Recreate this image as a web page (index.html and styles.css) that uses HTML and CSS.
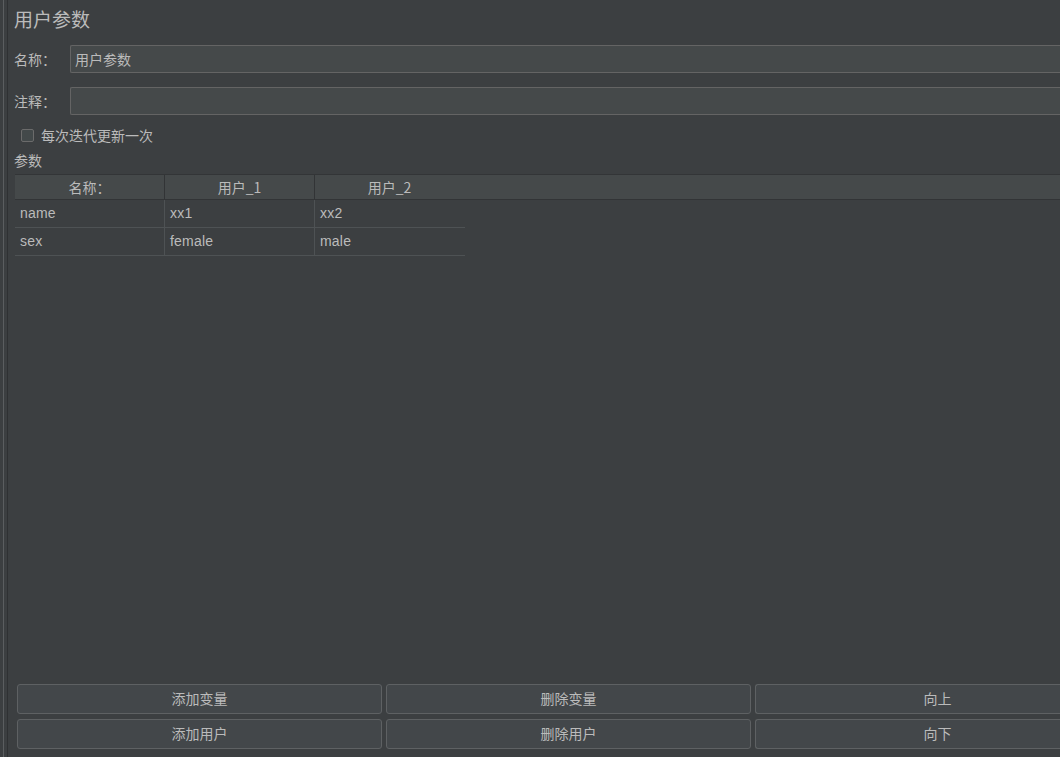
FILE: index.html
```html
<!DOCTYPE html>
<html lang="zh">
<head>
<meta charset="utf-8">
<link rel="stylesheet" href="styles.css">
</head>
<body>
<div class="app">
  <div class="edge"></div>
  <div class="panel">
    <div class="title">用户参数</div>
    <div class="field">
      <span class="label">名称：</span>
      <div class="input">用户参数</div>
    </div>
    <div class="field">
      <span class="label">注释：</span>
      <div class="input"></div>
    </div>
    <div class="check">
      <span class="box"></span>
      <span>每次迭代更新一次</span>
    </div>
    <div class="section">参数</div>
    <div class="table">
      <div class="thead">
        <div class="th">名称：</div>
        <div class="th">用户_1</div>
        <div class="th">用户_2</div>
      </div>
      <div class="tr">
        <div class="td">name</div>
        <div class="td">xx1</div>
        <div class="td">xx2</div>
      </div>
      <div class="tr">
        <div class="td">sex</div>
        <div class="td">female</div>
        <div class="td">male</div>
      </div>
    </div>
    <div class="buttons">
      <div class="btn">添加变量</div>
      <div class="btn">删除变量</div>
      <div class="btn btn-edge">向上</div>
      <div class="btn">添加用户</div>
      <div class="btn">删除用户</div>
      <div class="btn btn-edge">向下</div>
    </div>
  </div>
</div>
</body>
</html>
```
FILE: styles.css
```css
html, body {
  margin: 0;
  padding: 0;
  background: #3c3f41;
  width: 1060px;
  height: 757px;
  overflow: hidden;
}
body {
  font-family: "Liberation Sans", "Noto Sans CJK SC", sans-serif;
  color: #bbbbbb;
  font-size: 14px;
}
.app {
  display: flex;
  height: 757px;
}
.edge {
  width: 3px;
  margin-left: 3px;
  border-left: 1px solid #5b5e60;
  border-right: 1px solid #2f3133;
  flex: none;
}
.panel {
  flex: 1;
  display: flex;
  flex-direction: column;
  padding-left: 6px;
  min-width: 0;
}
.title {
  font-size: 19px;
  height: 20px;
  line-height: 20px;
  margin-top: 9px;
  font-family: "Noto Sans CJK SC", sans-serif;
}
.field {
  display: flex;
  align-items: center;
  margin-top: 16px;
  height: 28px;
}
.field + .field { margin-top: 14px; }
.label {
  width: 56px;
  flex: none;
  font-family: "Noto Sans CJK SC", sans-serif;
}
.input {
  flex: 1;
  height: 26px;
  line-height: 26px;
  background: #45494a;
  border: 1px solid #646464;
  border-right: none;
  border-radius: 2px 0 0 2px;
  padding-left: 4px;
  font-family: "Noto Sans CJK SC", sans-serif;
  color: #bbbbbb;
}
.check {
  display: flex;
  align-items: center;
  margin-top: 11px;
  height: 18px;
  padding-left: 7px;
  gap: 7px;
  font-family: "Noto Sans CJK SC", sans-serif;
}
.box {
  width: 11px;
  height: 11px;
  border: 1px solid #6b6b6b;
  background: #43494a;
  border-radius: 2px;
}
.section {
  margin-top: 7px;
  height: 18px;
  line-height: 18px;
  font-family: "Noto Sans CJK SC", sans-serif;
}
.table {
  margin-top: 5px;
  margin-left: 1px;
  height: 502px;
  background: #3c3f41;
  border-top: 1px solid #333537;
  flex: none;
}
.thead {
  display: flex;
  height: 24px;
  background: #45494a;
  border-bottom: 1px solid #323436;
}
.th {
  width: 149px;
  border-right: 1px solid #323436;
  text-align: center;
  line-height: 24px;
  font-family: "Noto Sans CJK SC", sans-serif;
}
.th:last-child { border-right: none; }
.tr {
  display: flex;
  width: 450px;
  height: 27px;
  border-bottom: 1px solid #4e5254;
}
.td {
  border-right: 1px solid #4e5254;
  line-height: 27px;
  padding-left: 5px;
  box-sizing: border-box;
  width: 150px;
  font-size: 14px;
  letter-spacing: 0.2px;
}
.td:last-child { border-right: none; }
.buttons {
  display: grid;
  grid-template-columns: 365px 365px 1fr;
  column-gap: 4px;
  row-gap: 5px;
  margin-top: 7px;
  margin-left: 3px;
}
.btn {
  height: 28px;
  line-height: 27px;
  text-align: center;
  background: #43474a;
  border: 1px solid #5e6163;
  border-radius: 3px;
  font-family: "Noto Sans CJK SC", sans-serif;
}
.btn-edge {
  border-right: none;
  border-radius: 3px 0 0 3px;
  padding-left: 59px;
}
```
